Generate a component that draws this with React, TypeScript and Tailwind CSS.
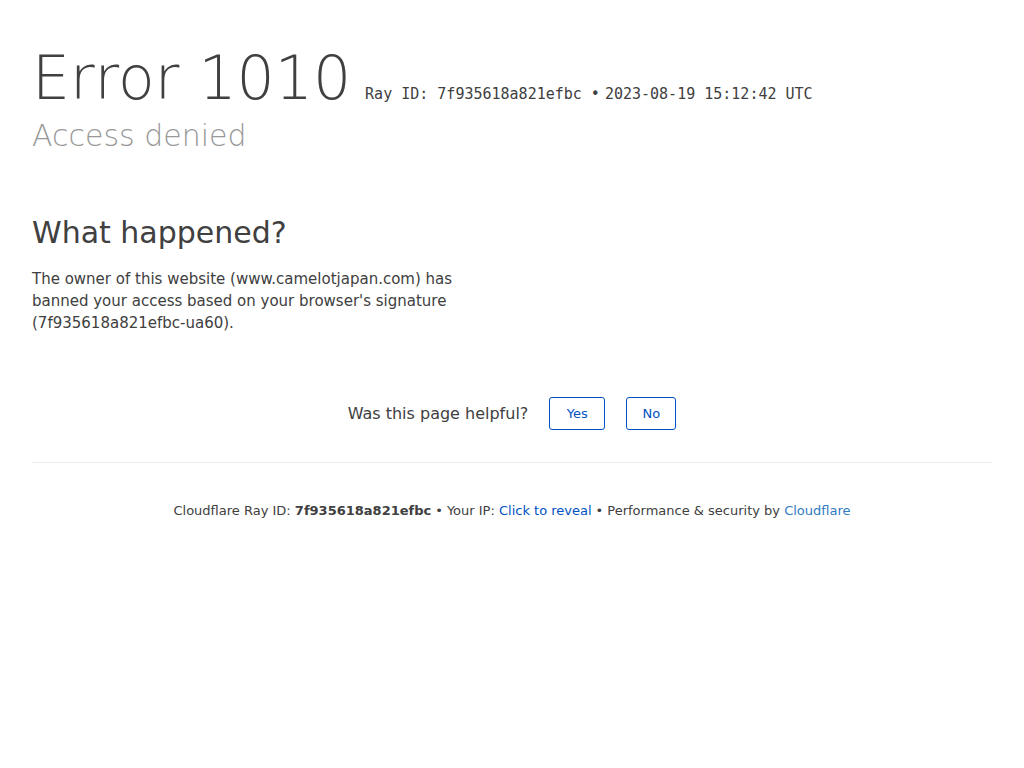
export default function App() {
  return (
    <div className="min-h-screen bg-white text-[#404040] [font-family:'DejaVu_Sans',sans-serif]">
      <div className="px-8">
        <div className="pt-[39px]">
          <div className="flex items-baseline">
            <h1 className="text-[60px] leading-[78px] font-extralight text-[#404040]">Error 1010</h1>
            <span className="ml-[14px] text-[15px] text-[#404040] [font-family:'DejaVu_Sans_Mono',monospace]">
              Ray ID: 7f935618a821efbc •<span className="ml-[5px]">2023-08-19 15:12:42 UTC</span>
            </span>
          </div>
          <h2 className="text-[30px] leading-[36px] font-extralight text-[#999999] mt-[1px]">Access denied</h2>
        </div>

        <div className="mt-[56px]">
          <h2 className="text-[30px] leading-[45px] font-normal text-[#404040]">What happened?</h2>
          <p className="mt-[13px] w-[450px] text-[15px] leading-[22px] text-[#404040]">
            The owner of this website (www.camelotjapan.com) has banned your access based on your browser's signature (7f935618a821efbc-ua60).
          </p>
        </div>

        <div className="mt-[63px] flex items-center justify-center">
          <span className="text-[16px] text-[#404040]">Was this page helpful?</span>
          <button className="ml-[21px] h-[33px] w-[56px] rounded-[3px] border border-[#0051c3] text-[13px] text-[#0051c3] bg-white">Yes</button>
          <button className="ml-[21px] h-[33px] w-[50px] rounded-[3px] border border-[#0051c3] text-[13px] text-[#0051c3] bg-white">No</button>
        </div>

        <div className="mt-[32px] border-t border-[#ebebeb]"></div>

        <div className="pt-[38px] text-center text-[13px] text-[#404040]">
          Cloudflare Ray ID: <span className="font-bold">7f935618a821efbc</span>
          <span className="mx-[4px]">•</span>
          Your IP: <span className="text-[#0051c3]">Click to reveal</span>
          <span className="mx-[4px]">•</span>
          Performance &amp; security by <span className="text-[#2f7bbf]">Cloudflare</span>
        </div>
      </div>
    </div>
  );
}
